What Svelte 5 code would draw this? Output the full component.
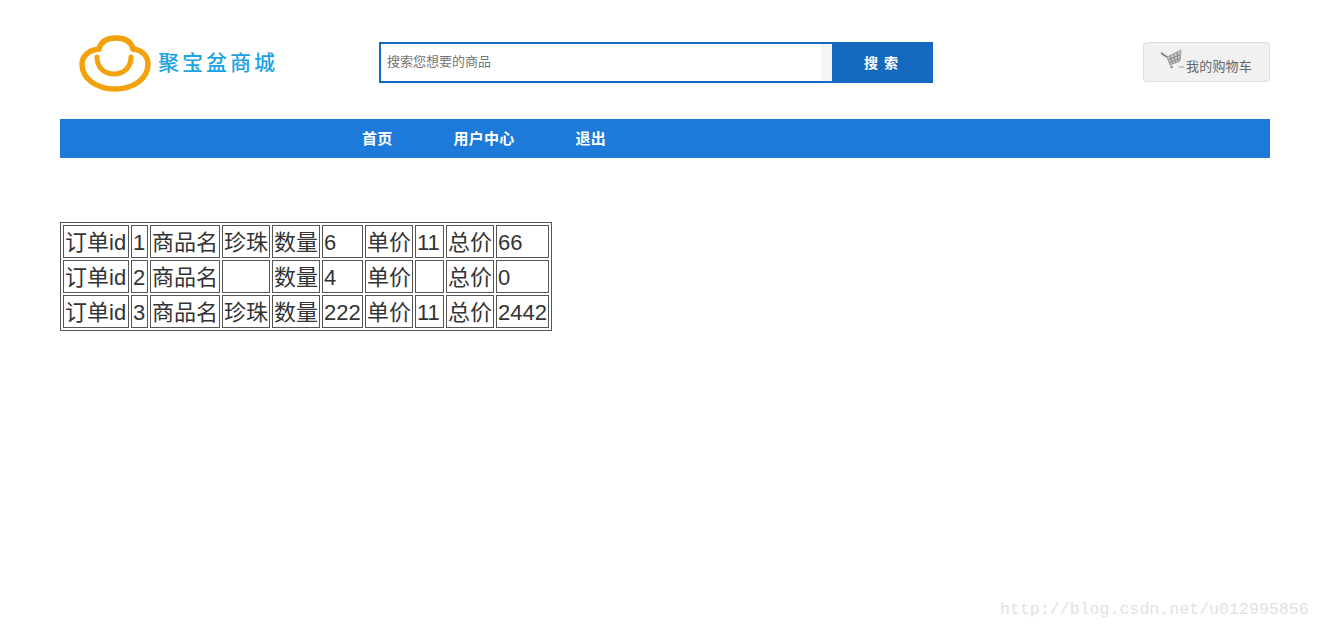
<script>
	const rows = [
		{ id: 1, name: '珍珠', qty: 6, price: 11, total: 66 },
		{ id: 2, name: '', qty: 4, price: '', total: 0 },
		{ id: 3, name: '珍珠', qty: 222, price: 11, total: 2442 }
	];
	const widths = [66, 17, 70, 48, 48, 41, 48, 29, 48, 53];
</script>

<div class="page">
	<header class="top">
		<div class="logo">
			<svg width="76" height="60" viewBox="0 0 76 60" aria-hidden="true">
				<path d="M22 14 C24 6 31 3 39 3 C47 3 54 6 56 14 C65 15 71 21 71 29 C71 44 56 54 38 54 C20 54 5 44 5 29 C5 21 12 15 22 14 Z" fill="none" stroke="#f3a20c" stroke-width="5.5" />
				<path d="M20 22 C20 33 28 39 37 39 C46 39 54 33 54 22" fill="none" stroke="#f3a20c" stroke-width="5" stroke-linecap="round" />
			</svg>
			<span class="brand">聚宝盆商城</span>
		</div>
		<form class="search" on:submit|preventDefault>
			<div class="field">
				<input type="text" placeholder="搜索您想要的商品" />
				<span class="field-end"></span>
			</div>
			<button type="submit">搜 索</button>
		</form>
		<a class="cart" href="#cart">
			<svg width="24" height="20" viewBox="0 0 24 20" aria-hidden="true">
				<path d="M1 4 L7 8" stroke="#777" stroke-width="1.6" fill="none" />
				<path d="M7 8 L21 1 L20 12 L10 16 Z" fill="#c4c4c4" stroke="#8f8f8f" stroke-width="0.8" />
				<path d="M10 6.5 L12.5 15 M13.5 4.8 L15.5 13.8 M17 3 L18 12.8 M8 11 L20.6 5.5 M9 14 L20.2 9" stroke="#808080" stroke-width="0.8" fill="none" />
				<circle cx="11.5" cy="18" r="1.4" fill="#999" />
				<path d="M19 18 H24" stroke="#b5b5b5" stroke-width="1.4" />
			</svg>
			<span>我的购物车</span>
		</a>
	</header>

	<nav class="nav">
		<a href="#home">首页</a>
		<a href="#user">用户中心</a>
		<a href="#logout">退出</a>
	</nav>

	<table class="orders">
		<colgroup>
			{#each widths as w}
				<col style="width: {w}px" />
			{/each}
		</colgroup>
		<tbody>
			{#each rows as row}
				<tr>
					<td>订单id</td>
					<td>{row.id}</td>
					<td>商品名</td>
					<td>{row.name}</td>
					<td>数量</td>
					<td>{row.qty}</td>
					<td>单价</td>
					<td>{row.price}</td>
					<td>总价</td>
					<td>{row.total}</td>
				</tr>
			{/each}
		</tbody>
	</table>
</div>

<span class="watermark">http://blog.csdn.net/u012995856</span>

<style>
	:global(body) {
		margin: 0;
		background: #fff;
		font-family: "Liberation Sans", "Noto Sans CJK SC", sans-serif;
		color: #333;
	}

	.page {
		width: 1210px;
		margin-left: 60px;
		height: 630px;
	}

	.top {
		height: 119px;
		display: flex;
		align-items: flex-start;
	}

	.logo {
		width: 319px;
		display: flex;
		align-items: flex-start;
		padding-top: 35px;
		box-sizing: border-box;
	}

	.logo svg {
		margin-left: 17px;
		flex: none;
	}

	.brand {
		margin: 11px 0 0 5px;
		font-family: "Noto Sans CJK SC", sans-serif;
		font-weight: 500;
		font-size: 21px;
		line-height: 30px;
		letter-spacing: 3px;
		color: #1ba3e4;
		white-space: nowrap;
	}

	.search {
		margin-top: 42px;
		width: 554px;
		height: 41px;
		display: flex;
	}

	.field {
		width: 453px;
		box-sizing: border-box;
		border: 2px solid #1569bf;
		border-right: 0;
		display: flex;
	}

	.field input {
		flex: 1;
		min-width: 0;
		border: 0;
		outline: 0;
		padding: 0 6px;
		height: 33px;
		font: 13px "Noto Sans CJK SC", sans-serif;
		color: #757575;
	}

	.field input::placeholder {
		color: #757575;
		opacity: 1;
	}

	.field-end {
		width: 11px;
		background: #f4f4f4;
	}

	.search button {
		width: 101px;
		border: 0;
		padding: 0 3px 1px 0;
		background: #1569bf;
		color: #fff;
		font: bold 14px "Noto Sans CJK SC", sans-serif;
		word-spacing: 3px;
	}

	.cart {
		margin: 42px 0 0 auto;
		width: 127px;
		height: 40px;
		box-sizing: border-box;
		border: 1px solid #ddd;
		border-radius: 4px;
		background: #f1f1f1;
		color: #666;
		text-decoration: none;
		font: 13px "Noto Sans CJK SC", sans-serif;
		letter-spacing: 0.2px;
		display: flex;
		align-items: flex-start;
		padding: 6px 0 0 16px;
	}

	.cart span {
		margin-top: 7px;
		margin-left: 2px;
		line-height: 19px;
	}

	.nav {
		height: 39px;
		box-sizing: border-box;
		background: #1e7ad9;
		display: flex;
		align-items: center;
		padding: 0 0 2px 302px;
		gap: 61px;
	}

	.nav a {
		color: #fff;
		text-decoration: none;
		font: bold 15px/37px "Noto Sans CJK SC", sans-serif;
		letter-spacing: 0.25px;
	}

	.orders {
		margin-top: 64px;
		border: 1px solid #555;
		border-spacing: 2px;
		table-layout: fixed;
		width: 492px;
		font-size: 22px;
		line-height: 29px;
	}

	.orders td {
		border: 1px solid #555;
		padding: 2px 1px 0;
		height: 29px;
		white-space: nowrap;
		overflow: hidden;
		box-sizing: content-box;
	}

	.watermark {
		position: absolute;
		left: 1000px;
		top: 600px;
		font: 16.6px/20px "Liberation Mono", monospace;
		color: #e2e2de;
	}
</style>
